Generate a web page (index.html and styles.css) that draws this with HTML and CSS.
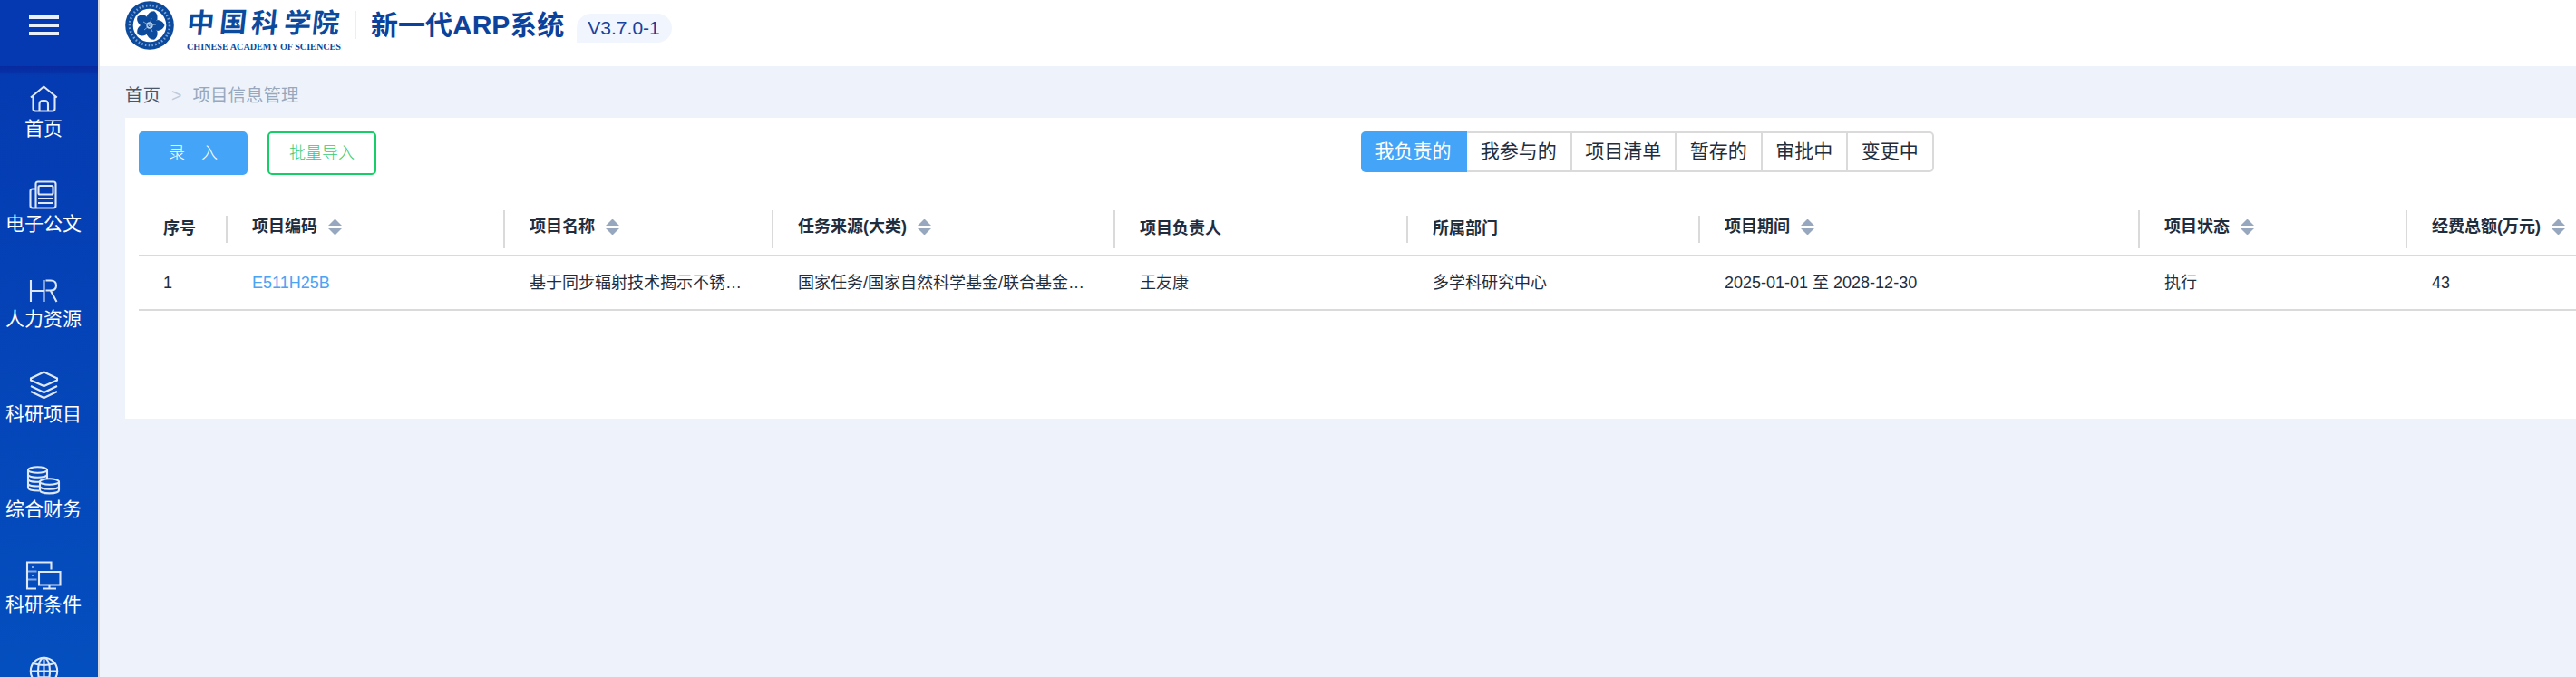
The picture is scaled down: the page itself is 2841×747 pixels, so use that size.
FILE: index.html
```html
<!DOCTYPE html>
<html lang="zh-CN">
<head>
<meta charset="utf-8">
<title>新一代ARP系统</title>
<link rel="stylesheet" href="styles.css">
</head>
<body>
<div class="app">
  <aside class="sidebar">
    <div class="menu-toggle"><i class="bar"></i><i class="bar"></i><i class="bar"></i></div>
    <nav class="nav">
      <a class="nav-item">
        <svg class="nav-icon" viewBox="0 0 40 32"><path d="M6 13.500 20.300 1.500 34.800 13.500M8.500 11.500V26q0 2.500 2.500 2.500H30q2.500 0 2.500-2.500V11.500M15.500 28V21q0-4 4-4h1.500q4 0 4 4v7"/></svg>
        <span>首页</span>
      </a>
      <a class="nav-item">
        <svg class="nav-icon" viewBox="0 0 40 32"><path d="M11.500 30V4q0-2.500 2.500-2.500H31q2.500 0 2.500 2.500V28q0 2.500-2.500 2.500H8q-2.500 0-2.500-2.500V12q0-2.500 2.500-2.500h3"/><rect x="14.500" y="6" width="16" height="9.500" rx="1.500"/><path d="M14 20h17M14 25h17"/></svg>
        <span>电子公文</span>
      </a>
      <a class="nav-item">
        <svg class="nav-icon" viewBox="0 0 40 32"><path d="M6 5V29M20.500 5V29M6 17H20.500M22.500 5.500h5.500q6 0 6 5.500t-6 5.500h-5.500M28 17l6.500 12"/></svg>
        <span>人力资源</span>
      </a>
      <a class="nav-item">
        <svg class="nav-icon" viewBox="0 0 40 32"><path d="M20.500 1.500 35 8.500v2L20.500 17 6 10.500v-2zM6 17l14.500 7L35 17M6 23l14.500 7L35 23"/></svg>
        <span>科研项目</span>
      </a>
      <a class="nav-item">
        <svg class="nav-icon" viewBox="0 0 40 32"><ellipse cx="13.500" cy="4.500" rx="10.500" ry="3.300"/><path d="M3 4.500V24c0 2.500 6 3.500 12 3.500M24 4.500V14M3 9.500c0 4.300 21 4.300 21 0M3 14.500c0 3 7 3.700 14 3M3 19.500c0 2.500 6 3.300 12 3M16 17.500V27c0 4.500 21 4.500 21 0V17.500M16 22.500c0 4.300 21 4.300 21 0"/><ellipse cx="26.500" cy="17.500" rx="10.500" ry="3.300"/></svg>
        <span>综合财务</span>
      </a>
      <a class="nav-item">
        <svg class="nav-icon" viewBox="0 0 40 32"><path d="M12 30.500H2V1.500H28.500V9.500M15 12H38.500V26.500H15zM26.500 27v3.500M19 30.500H34"/><path class="faint" d="M3 11.500h9.500M3 20.500h9.500M7 7h3M7 16h3"/></svg>
        <span>科研条件</span>
      </a>
      <a class="nav-item">
        <svg class="nav-icon" viewBox="0 0 40 32"><circle cx="20.500" cy="16.500" r="14.700"/><ellipse cx="20.500" cy="16.500" rx="6.500" ry="14.700"/><path d="M20.500 2v29M6 16.500h29M9 8q11.500 4 23 0M9 25q11.500-4 23 0"/></svg>
      </a>
    </nav>
  </aside>
  <div class="main">
    <header class="header">
      <svg class="logo" viewBox="0 0 240 56">
        <circle cx="27" cy="28" r="26.800" fill="#0b4a9c"/>
        <circle cx="27" cy="28" r="22" fill="none" stroke="#7fa3d0" stroke-width="2.600" stroke-dasharray="1.500 2.300"/>
        <circle cx="27" cy="28" r="18.300" fill="#fff"/>
        <g fill="#0b4a9c">
          <path id="petal" d="M24 28 21 19q1-6 6-7.500 5 1.500 6 7.500l-3 9z" transform="rotate(18 27 28)"/>
          <use href="#petal" transform="rotate(72 27 28)"/>
          <use href="#petal" transform="rotate(144 27 28)"/>
          <use href="#petal" transform="rotate(216 27 28)"/>
          <use href="#petal" transform="rotate(288 27 28)"/>
          <circle cx="27" cy="28" r="7"/>
        </g>
        <circle cx="27" cy="28" r="3" fill="none" stroke="#c7d7ec" stroke-width="1.300"/>
        <path d="M27 28l2-8M27 28l7-1M27 28l3 7M27 28l-6 5M27 28l-7-4" stroke="#9db9dc" stroke-width=".8"/>
        <g class="logo-cn" transform="skewX(-6)">
          <text x="71" y="36">中</text><text x="107" y="35">国</text><text x="142" y="36">科</text><text x="178" y="36">学</text><text x="209" y="36">院</text>
        </g>
        <text class="logo-en" x="68" y="54.500" textLength="170" lengthAdjust="spacingAndGlyphs">CHINESE ACADEMY OF SCIENCES</text>
      </svg>
      <i class="header-line"></i>
      <h1 class="title">新一代ARP系统</h1>
      <span class="version">V3.7.0-1</span>
    </header>
    <div class="breadcrumb"><span class="crumb-home">首页</span><span class="crumb-sep">&gt;</span><span>项目信息管理</span></div>
    <section class="panel">
      <div class="toolbar">
        <button class="btn btn-primary">录&emsp;入</button>
        <button class="btn btn-outline">批量导入</button>
        <div class="tabs">
          <span class="tab active">我负责的</span><span class="tab">我参与的</span><span class="tab">项目清单</span><span class="tab">暂存的</span><span class="tab">审批中</span><span class="tab">变更中</span>
        </div>
      </div>
      <div class="table">
        <div class="row head">
          <div class="th">序号</div>
          <div class="th sortable">项目编码<i class="sort"></i></div>
          <div class="th sortable">项目名称<i class="sort"></i></div>
          <div class="th sortable">任务来源(大类)<i class="sort"></i></div>
          <div class="th">项目负责人</div>
          <div class="th">所属部门</div>
          <div class="th sortable">项目期间<i class="sort"></i></div>
          <div class="th sortable">项目状态<i class="sort"></i></div>
          <div class="th sortable">经费总额(万元)<i class="sort"></i></div>
        </div>
        <div class="row">
          <div class="td">1</div>
          <div class="td link">E511H25B</div>
          <div class="td">基于同步辐射技术揭示不锈<span class="dots">…</span></div>
          <div class="td">国家任务/国家自然科学基金/联合基金<span class="dots">…</span></div>
          <div class="td">王友康</div>
          <div class="td">多学科研究中心</div>
          <div class="td">2025-01-01 至 2028-12-30</div>
          <div class="td">执行</div>
          <div class="td">43</div>
        </div>
      </div>
    </section>
  </div>
</div>
</body>
</html>
```
FILE: styles.css
```css
* { box-sizing: border-box; }
body {
  margin: 0;
  height: 747px;
  overflow: hidden;
  background: #eef3fb;
  color: #1f2d3d;
  font-family: "Liberation Sans", "Noto Sans CJK SC", sans-serif;
}
.app { display: flex; height: 747px; overflow: hidden; }

.sidebar {
  flex: none;
  width: 110px;
  height: 747px;
  overflow: hidden;
  border-right: 2px solid #d9d9db;
  background: linear-gradient(#0538b0, #044fbf);
}
.menu-toggle {
  display: flex;
  flex-direction: column;
  gap: 5px;
  height: 73px;
  padding: 17px 0 0 32px;
  background: #0539b1;
}
.bar { width: 33px; height: 4px; background: #eaf0fa; }
.nav {
  height: 674px;
  padding-top: 21px;
  background: linear-gradient(rgba(8, 38, 155, .8), rgba(8, 38, 155, .6) 5px, rgba(8, 38, 155, 0) 10px);
}
.nav-item {
  display: flex;
  flex-direction: column;
  align-items: center;
  width: 96px;
  height: 105px;
  color: #fff;
  font-size: 21px;
  line-height: 30px;
  white-space: nowrap;
}
.nav-icon {
  flex: none;
  width: 40px;
  height: 32px;
  margin-bottom: 1px;
  fill: none;
  stroke: #dfe8f8;
  stroke-width: 2.1;
}
.faint { opacity: .6; }

.main { flex: 1; min-width: 0; }
.header { display: flex; height: 73px; padding-left: 28px; background: #fff; }
.logo { flex: none; width: 240px; height: 56px; }
.logo-cn { fill: #0b4a9c; font: 700 30px "Noto Sans CJK SC", sans-serif; }
.logo-en { fill: #0b4a9c; font: 700 9.5px "Liberation Serif", serif; }
.header-line { width: 2px; height: 31px; margin: 12px 16px 0 13px; background: #eeeef0; }
.title { margin: 5px 0 0; font-size: 30px; line-height: 45px; color: #0b429b; white-space: nowrap; }
.version {
  width: 105px;
  height: 32px;
  margin: 15px 0 0 14px;
  padding-left: 12px;
  border-radius: 16px 16px 16px 0;
  background: #f1f5fd;
  color: #1a419b;
  font-size: 21px;
  line-height: 31px;
}
.breadcrumb {
  display: flex;
  height: 57px;
  padding: 3px 0 0 28px;
  font-size: 19.5px;
  line-height: 58px;
  color: #97a8be;
}
.crumb-home { color: #48576a; }
.crumb-sep { margin: 0 12px; color: #bfcbd9; }

.panel {
  height: 332px;
  margin-left: 28px;
  padding: 15px 0 0 15px;
  background: #fff;
  overflow: hidden;
}
.toolbar { display: flex; height: 78px; align-items: flex-start; }
.btn {
  width: 120px;
  height: 48px;
  margin: 0 22px 0 0;
  padding: 0 0 4px;
  border: 2px solid #44a5f8;
  border-radius: 5px;
  font: 300 18px "Liberation Sans", "Noto Sans CJK SC", sans-serif;
}
.btn-primary { background: #44a5f8; color: #fff; }
.btn-outline { border-color: #16ce68; background: #fff; color: #35cb72; }
.tabs { display: flex; margin-left: 1064px; font-size: 21px; line-height: 39px; }
.tab {
  width: 94.500px;
  height: 45px;
  border: solid #dadadb;
  border-width: 2px 2px 2px 0;
  text-align: center;
  white-space: nowrap;
}
.tab:nth-child(-n+3) { width: 115.500px; }
.tab.active { width: 117px; border-color: #44a5f8; border-radius: 5px 0 0 5px; background: #44a5f8; color: #fff; }
.tab:last-child { border-radius: 0 5px 5px 0; }

.row {
  display: grid;
  grid-template-columns: 98px 306px 296px 377px 323px 322px 485px 295px 295px;
  align-items: center;
  height: 60px;
  border-bottom: 2px solid #dadadb;
  font-size: 18px;
  white-space: nowrap;
}
.head { font-weight: 700; }
.th {
  display: flex;
  height: 30px;
  margin-top: 2px;
  padding-left: 27px;
  border-right: 2px solid #dadadb;
  line-height: 29px;
}
.th.sortable { height: 42px; line-height: 37px; }
.th:last-child { border-right: 0; }
.sort { width: 15px; height: 17px; margin: 10px 0 0 12px; }
.sort::before, .sort::after { content: ""; display: block; border: solid transparent; border-width: 0 7.500px; }
.sort::before { border-bottom: 7px solid #97a8be; margin-bottom: 3px; }
.sort::after { border-top: 7px solid #97a8be; }
.td { padding-left: 27px; line-height: 28px; margin-top: -1px; }
.link { color: #4aa3f5; }
.dots { font-family: "Liberation Sans", sans-serif; }
```
